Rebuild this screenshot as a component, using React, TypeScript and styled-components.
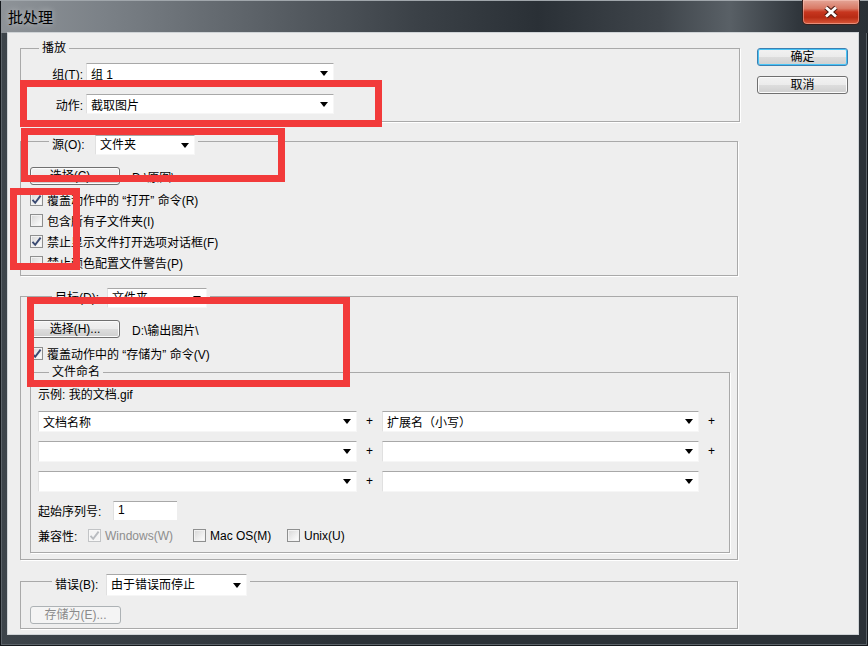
import styled, { createGlobalStyle } from 'styled-components';

const GlobalStyle = createGlobalStyle`
  * { box-sizing: border-box; }
  html, body { margin: 0; padding: 0; background: #22282e; }
  body {
    font-family: "Liberation Sans", "Noto Sans CJK SC", sans-serif;
    font-size: 12px;
    color: #000;
  }
`;

const Tick = ({ muted }: { muted?: boolean }) => (
	<svg width="11" height="11" viewBox="0 0 11 11">
		<path
			d="M1.5 5.8 L4.2 8.8 L9.6 1.6"
			fill="none"
			stroke={muted ? '#b9bcc0' : '#3a4a72'}
			strokeWidth="1.9"
		/>
	</svg>
);

const CheckOption = (props: { label: string; checked?: boolean; disabled?: boolean; w?: number; h?: number }) => (
	<CheckRow $w={props.w} $h={props.h} $disabled={props.disabled}>
		<Box $disabled={props.disabled}>{props.checked && <Tick muted={props.disabled} />}</Box>
		<span>{props.label}</span>
	</CheckRow>
);

const Select = (props: { value?: string; w: number; h?: number }) => (
	<Dropdown $w={props.w} $h={props.h}>
		<span>{props.value}</span>
		<Arrow />
	</Dropdown>
);

const App = () => {
	return (
		<>
			<GlobalStyle />
			<Window>
				<TitleBar>
					<Title>批处理</Title>
					<CloseButton>
						<svg width="18" height="14" viewBox="0 0 18 14">
							<path d="M4 2.5 L14 11.5 M14 2.5 L4 11.5" stroke="#4a1a12" strokeWidth="5" />
							<path d="M4 2.5 L14 11.5 M14 2.5 L4 11.5" stroke="#fff" strokeWidth="2.8" />
						</svg>
					</CloseButton>
				</TitleBar>
				<Body>
					<MainColumn>
						<Group $w={720}>
							<Legend $ml={18}>播放</Legend>
							<GroupBody $pad="7px 0 7px 0">
								<FieldRow>
									<FieldLabel>组(T):</FieldLabel>
									<Select value="组 1" w={248} />
								</FieldRow>
								<FieldRow $mt={11}>
									<FieldLabel>动作:</FieldLabel>
									<Select value="截取图片" w={248} />
								</FieldRow>
							</GroupBody>
						</Group>

						<Group $w={718} $mt={5}>
							<Legend $ml={28} $pt={8}>
								<LegendField>
									<LegendLabel $w={43}>源(O):</LegendLabel>
									<Select value="文件夹" w={100} />
								</LegendField>
							</Legend>
							<GroupBody $pad="12px 0 2px 9px">
								<PathRow>
									<PushButton $w={90}>选择(C)...</PushButton>
									<PathText>{'D:\\原图\\'}</PathText>
								</PathRow>
								<CheckList $mt={4}>
									<CheckOption label="覆盖动作中的 “打开” 命令(R)" checked />
									<CheckOption label="包含所有子文件夹(I)" />
									<CheckOption label="禁止显示文件打开选项对话框(F)" checked />
									<CheckOption label="禁止颜色配置文件警告(P)" />
								</CheckList>
							</GroupBody>
						</Group>

						<Group $w={718} $mt={8}>
							<Legend $ml={31} $pt={4}>
								<LegendField>
									<LegendLabel $w={52}>目标(D):</LegendLabel>
									<Select value="文件夹" w={100} />
								</LegendField>
							</Legend>
							<GroupBody $pad="12px 0 6px 9px">
								<PathRow>
									<PushButton $w={90}>选择(H)...</PushButton>
									<PathText>{'D:\\输出图片\\'}</PathText>
								</PathRow>
								<CheckList $mt={5}>
									<CheckOption label="覆盖动作中的 “存储为” 命令(V)" checked />
								</CheckList>
								<Group $w={700}>
									<Legend $ml={18}>文件命名</Legend>
									<GroupBody $pad="7px 0 8px 7px">
										<Sample>示例: 我的文档.gif</Sample>
										<NameGrid>
											<Select value="文档名称" w={319} h={21} />
											<Plus>+</Plus>
											<Select value="扩展名（小写）" w={317} h={21} />
											<Plus>+</Plus>
											<Select w={319} h={21} />
											<Plus>+</Plus>
											<Select w={317} h={21} />
											<Plus>+</Plus>
											<Select w={319} h={21} />
											<Plus>+</Plus>
											<Select w={317} h={21} />
											<Plus />
										</NameGrid>
										<SerialRow>
											<InlineLabel $w={75}>起始序列号:</InlineLabel>
											<TextInput>1</TextInput>
										</SerialRow>
										<CompatRow>
											<InlineLabel $w={50}>兼容性:</InlineLabel>
											<CheckOption label="Windows(W)" checked disabled w={105} h={16} />
											<CheckOption label="Mac OS(M)" w={94} h={16} />
											<CheckOption label="Unix(U)" h={16} />
										</CompatRow>
									</GroupBody>
								</Group>
							</GroupBody>
						</Group>

						<Group $w={718} $mt={6}>
							<Legend $ml={31} $pt={8}>
								<LegendField>
									<LegendLabel $w={51}>错误(B):</LegendLabel>
									<Select value="由于错误而停止" w={141} h={22} />
								</LegendField>
							</Legend>
							<GroupBody $pad="10px 0 4px 9px">
								<PushButton $w={91} disabled>
									存储为(E)...
								</PushButton>
							</GroupBody>
						</Group>
					</MainColumn>

					<SideColumn>
						<PushButton $w={91} $primary>
							确定
						</PushButton>
						<PushButton $w={91}>取消</PushButton>
					</SideColumn>
				</Body>

				<Marker $x={20} $y={80} $w={362} $h={47} />
				<Marker $x={21} $y={128} $w={264} $h={54} />
				<Marker $x={10} $y={188} $w={70} $h={82} />
				<Marker $x={27} $y={297} $w={323} $h={90} />
			</Window>
		</>
	);
};

export default App;

const Window = styled.div`
	position: relative;
	width: 868px;
	height: 646px;
	display: flex;
	flex-direction: column;
	padding: 0 10px 12px 8px;
	background: linear-gradient(90deg, #3d444a 0%, #2b3137 40%, #2b3137 100%);
	box-shadow: inset 0 0 0 1px #14181c, inset 0 0 0 2px #5b6268;
	overflow: hidden;
`;

const TitleBar = styled.div`
	height: 33px;
	margin: 0 -10px 0 -8px;
	padding: 0 9px 0 8px;
	display: flex;
	justify-content: space-between;
	align-items: flex-start;
	background: linear-gradient(
		90deg,
		#8e9398 0%,
		#7b8187 12%,
		#5b6167 30%,
		#3b4147 48%,
		#2a3036 62%,
		#3f454b 76%,
		#596066 84%,
		#30363c 92%,
		#2a3036 100%
	);
	box-shadow: inset 0 1px 0 #a0a6ab, inset 1px 0 0 #14181c;
`;

const Title = styled.div`
	padding-top: 8px;
	font-family: "Noto Sans CJK SC", sans-serif;
	font-size: 15px;
	line-height: 18px;
	color: #000;
	text-shadow: 0 0 6px rgba(255, 255, 255, 0.55);
`;

const CloseButton = styled.div`
	width: 58px;
	height: 25px;
	margin-right: -1px;
	display: flex;
	align-items: center;
	justify-content: center;
	border: 1px solid #3a1f1c;
	border-top: none;
	border-radius: 0 0 5px 5px;
	background: linear-gradient(#e4a597 0%, #d97a66 35%, #c7361f 50%, #b82b14 72%, #d9593b 100%);
	box-shadow: inset 0 0 0 1px rgba(255, 210, 200, 0.45);
`;

const Body = styled.div`
	flex: 1;
	display: flex;
	background: #eeeeee;
	box-shadow: 0 0 0 1px #cfd3d6;
`;

const MainColumn = styled.div`
	width: 732px;
	padding: 7px 0 0 12px;
	display: flex;
	flex-direction: column;
`;

const SideColumn = styled.div`
	margin-left: 17px;
	padding-top: 15px;
	display: flex;
	flex-direction: column;
	gap: 10px;
`;

const Group = styled.fieldset<{ $w: number; $mt?: number }>`
	width: ${(p) => p.$w}px;
	min-width: 0;
	margin: ${(p) => p.$mt ?? 0}px 0 0 0;
	padding: 0;
	border: 1px solid #a9a9a9;
	box-shadow: 1px 1px 0 #ffffff;
`;

const Legend = styled.legend<{ $ml: number; $pt?: number }>`
	margin-left: ${(p) => p.$ml}px;
	padding: ${(p) => p.$pt ?? 0}px 3px 0 3px;
	line-height: 16px;
`;

const LegendField = styled.div`
	display: flex;
	align-items: center;
`;

const LegendLabel = styled.span<{ $w: number }>`
	width: ${(p) => p.$w}px;
	white-space: nowrap;
`;

const GroupBody = styled.div<{ $pad: string }>`
	padding: ${(p) => p.$pad};
	display: flex;
	flex-direction: column;
	align-items: flex-start;
`;

const FieldRow = styled.div<{ $mt?: number }>`
	display: flex;
	align-items: center;
	gap: 3px;
	margin-top: ${(p) => p.$mt ?? 0}px;
`;

const FieldLabel = styled.span`
	width: 62px;
	text-align: right;
	white-space: nowrap;
`;

const Dropdown = styled.div<{ $w: number; $h?: number }>`
	width: ${(p) => p.$w}px;
	height: ${(p) => p.$h ?? 20}px;
	display: flex;
	align-items: center;
	justify-content: space-between;
	padding: 0 5px 0 4px;
	background: #fff;
	border-top: 1px solid #a8a8a8;
	border-left: 1px solid #e0e0e0;
	border-right: 1px solid #f6f6f6;
	border-bottom: 1px solid #f6f6f6;
	white-space: nowrap;
`;

const Arrow = styled.span`
	width: 0;
	height: 0;
	border-left: 4.5px solid transparent;
	border-right: 4.5px solid transparent;
	border-top: 5px solid #000;
`;

const PushButton = styled.button<{ $w: number; $primary?: boolean }>`
	width: ${(p) => p.$w}px;
	height: 18px;
	padding: 0;
	font: inherit;
	line-height: 16px;
	color: #000;
	border: 1px solid ${(p) => (p.$primary ? '#3c7fb1' : '#707070')};
	border-radius: 3px;
	background: linear-gradient(#f2f2f2 0%, #ebebeb 50%, #dddddd 51%, #cfcfcf 100%);
	box-shadow: inset 0 0 0 1px ${(p) => (p.$primary ? '#48c4f6' : '#fbfbfb')};

	&:disabled {
		color: #8a8a8a;
		border-color: #adb2b5;
		background: #f4f4f4;
		box-shadow: none;
	}
`;

const PathRow = styled.div`
	display: flex;
	align-items: center;
	gap: 12px;
`;

const PathText = styled.span`
	white-space: nowrap;
`;

const CheckList = styled.div<{ $mt?: number }>`
	margin-top: ${(p) => p.$mt ?? 0}px;
	display: flex;
	flex-direction: column;
`;

const CheckRow = styled.div<{ $w?: number; $h?: number; $disabled?: boolean }>`
	display: flex;
	align-items: center;
	gap: 4px;
	height: ${(p) => p.$h ?? 21}px;
	width: ${(p) => (p.$w ? `${p.$w}px` : 'auto')};
	color: ${(p) => (p.$disabled ? '#8d8d8d' : '#000')};
	white-space: nowrap;
`;

const Box = styled.span<{ $disabled?: boolean }>`
	width: 13px;
	height: 13px;
	flex: none;
	display: flex;
	align-items: center;
	justify-content: center;
	border: 1px solid ${(p) => (p.$disabled ? '#c2c4c6' : '#8e8f8f')};
	background: ${(p) =>
		p.$disabled ? '#f4f4f4' : 'linear-gradient(135deg, #d6d6d6 0%, #f4f4f4 70%, #ffffff 100%)'};
	box-shadow: inset 0 0 0 1px ${(p) => (p.$disabled ? '#f7f7f7' : '#f2f2f2')};
`;

const Sample = styled.div`
	line-height: 16px;
`;

const NameGrid = styled.div`
	margin-top: 8px;
	display: grid;
	grid-template-columns: 319px 25px 317px 25px;
	row-gap: 9px;
`;

const Plus = styled.span`
	line-height: 21px;
	text-align: center;
	font-size: 12px;
`;

const SerialRow = styled.div`
	margin-top: 9px;
	display: flex;
	align-items: center;
`;

const InlineLabel = styled.span<{ $w: number }>`
	width: ${(p) => p.$w}px;
	white-space: nowrap;
`;

const TextInput = styled.div`
	width: 64px;
	height: 19px;
	padding-left: 4px;
	line-height: 17px;
	background: #fff;
	border-top: 1px solid #a8a8a8;
	border-left: 1px solid #e0e0e0;
`;

const CompatRow = styled.div`
	margin-top: 7px;
	display: flex;
	align-items: center;
`;

const Marker = styled.div<{ $x: number; $y: number; $w: number; $h: number }>`
	position: absolute;
	left: ${(p) => p.$x}px;
	top: ${(p) => p.$y}px;
	width: ${(p) => p.$w}px;
	height: ${(p) => p.$h}px;
	border: 7px solid #f23a3a;
	pointer-events: none;
`;
